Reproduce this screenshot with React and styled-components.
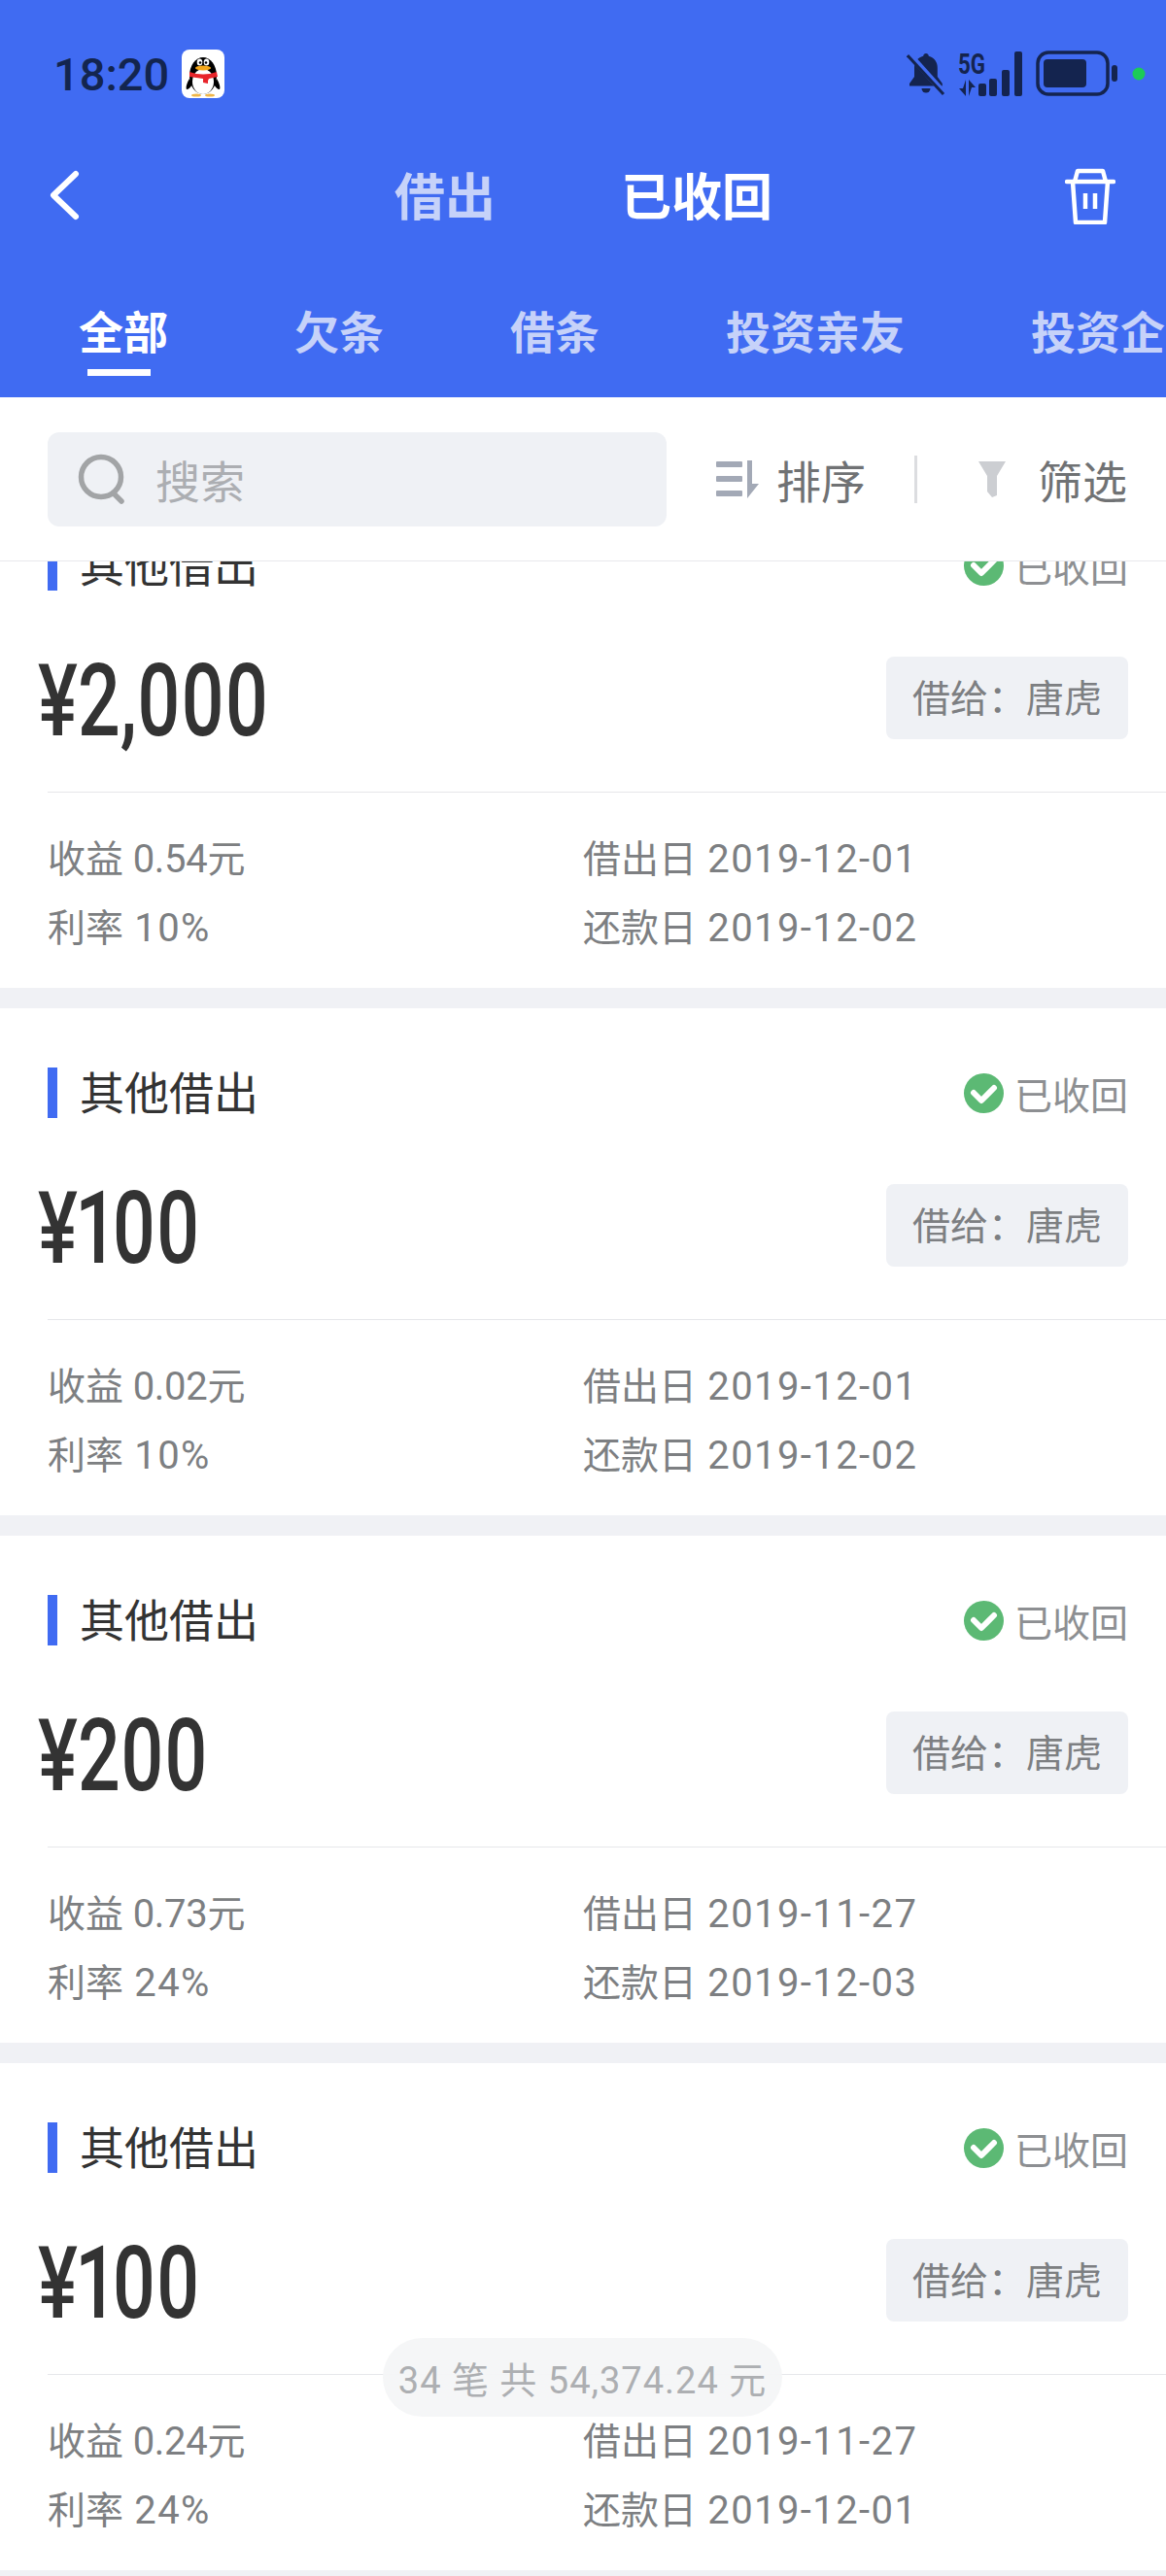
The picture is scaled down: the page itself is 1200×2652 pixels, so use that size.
import React from "react";
import styled, { createGlobalStyle } from "styled-components";

const FONT = `Roboto, "Noto Sans CJK SC", sans-serif`;

const Global = createGlobalStyle`
  html, body { margin: 0; padding: 0; background: #fff; }
  * { box-sizing: border-box; }
`;

const Page = styled.div`
  position: relative;
  width: 1200px;
  height: 2652px;
  display: flex;
  flex-direction: column;
  overflow: hidden;
  background: #f0f1f5;
  font-family: ${FONT};
`;

const Header = styled.header`
  height: 409px;
  flex: none;
  background: #406bf2;
  display: flex;
  flex-direction: column;
`;

const StatusBar = styled.div`
  height: 152px;
  flex: none;
  padding: 0 21px 0 55px;
  display: flex;
  align-items: center;
  justify-content: space-between;
`;

const StatusLeft = styled.div`
  display: flex;
  align-items: center;
  gap: 13px;
`;

const Clock = styled.span`
  font-size: 47px;
  font-weight: 500;
  color: #13254f;
`;

const StatusRight = styled.div`
  display: flex;
  align-items: center;
`;

const NavBar = styled.div`
  height: 98px;
  flex: none;
  padding: 0 52px 0 49px;
  position: relative;
  display: flex;
  align-items: center;
  justify-content: space-between;
`;

const NavTitles = styled.div`
  position: absolute;
  left: 406px;
  top: -2px;
  height: 100%;
  display: flex;
  align-items: center;
  gap: 129px;
`;

const NavTitle = styled.span`
  font-size: 52px;
  font-weight: 700;
  color: ${(p) => (p.$active ? "#ffffff" : "#c6d2f9")};
`;

const Tabs = styled.nav`
  flex: 1;
  display: flex;
  padding: 60px 0 0 81px;
  gap: 130px;
  white-space: nowrap;
  overflow: hidden;
`;

const Tab = styled.span`
  position: relative;
  height: 70px;
  line-height: 66px;
  font-size: 46px;
  font-weight: 700;
  color: ${(p) => (p.$active ? "#ffffff" : "#c6d2f9")};
  &::after {
    content: "";
    display: ${(p) => (p.$active ? "block" : "none")};
    position: absolute;
    left: 9px;
    right: 18px;
    bottom: -7px;
    height: 7px;
    background: #fff;
  }
`;

const Toolbar = styled.div`
  height: 169px;
  flex: none;
  background: #fff;
  border-bottom: 1px solid #e8e9ec;
  display: flex;
  align-items: center;
  padding: 0 42px 0 49px;
`;

const SearchBox = styled.div`
  width: 637px;
  height: 97px;
  flex: none;
  background: #eff1f5;
  border-radius: 12px;
  padding-left: 31px;
  display: flex;
  align-items: center;
  gap: 30px;
  font-size: 46px;
  color: #acaeb2;
`;

const ToolGroup = styled.div`
  flex: 1;
  display: flex;
  align-items: center;
  margin-left: 51px;
  font-size: 46px;
  color: #707274;
`;

const ToolButton = styled.div`
  display: flex;
  align-items: center;
  flex: none;
  white-space: nowrap;
  gap: ${(p) => p.$gap}px;
`;

const ToolDivider = styled.div`
  width: 3px;
  height: 49px;
  flex: none;
  background: #dcdde0;
  margin: 0 62px 0 50px;
`;

const Scroller = styled.div`
  flex: 1;
  overflow: hidden;
`;

const List = styled.div`
  margin-top: -83px;
  display: flex;
  flex-direction: column;
  gap: 21px;
`;

const Card = styled.article`
  background: #fff;
  height: 522px;
  flex: none;
  padding: 60px 0 0 49px;
`;

const CardHead = styled.div`
  height: 54px;
  display: flex;
  align-items: center;
  justify-content: space-between;
  padding-right: 39px;
`;

const CardType = styled.div`
  display: flex;
  align-items: center;
  gap: 23px;
  padding-top: 2px;
  font-size: 46px;
  line-height: 52px;
  color: #333;
  &::before {
    content: "";
    width: 10px;
    height: 52px;
    margin-top: -2px;
    background: #406bf2;
  }
`;

const StatusTag = styled.div`
  display: flex;
  align-items: center;
  gap: 11px;
  font-size: 39px;
  color: #8d8f92;
`;

const AmountRow = styled.div`
  height: 85px;
  margin-top: 67px;
  display: flex;
  align-items: center;
  justify-content: space-between;
  padding-right: 39px;
`;

const Amount = styled.div`
  margin-left: -10px;
  font-size: 104px;
  font-weight: 500;
  font-variant-numeric: proportional-nums;
  color: #333;
  line-height: 85px;
  transform: scaleX(0.74);
  transform-origin: left center;
  padding-top: 6px;
`;

const LenderTag = styled.div`
  width: 249px;
  height: 85px;
  padding-bottom: 6px;
  background: #eff1f5;
  border-radius: 8px;
  display: flex;
  align-items: center;
  justify-content: center;
  font-size: 39px;
  color: #7d7f82;
  white-space: pre;
`;

const Details = styled.div`
  margin-top: 54px;
  border-top: 1px solid #e6e7ea;
  padding-top: 33px;
  display: grid;
  grid-template-columns: 551px 1fr;
  grid-auto-rows: 71px;
`;

const DetailText = styled.div`
  font-size: 39px;
  line-height: 71px;
  color: #7d7f82;
  white-space: nowrap;
`;

const Num = styled.span`
  font-size: 40px;
  letter-spacing: ${(p) => (p.$tight ? "-0.3px" : "1.4px")};
`;

const TotalPill = styled.div`
  position: absolute;
  left: 394px;
  top: 2407px;
  width: 411px;
  height: 81px;
  border-radius: 41px;
  background: rgba(244, 245, 247, 0.94);
  display: flex;
  align-items: center;
  justify-content: center;
  font-size: 38px;
  letter-spacing: 1px;
  color: #adafb2;
  white-space: pre;
`;

const NAVY = "#14244f";

const QQIcon = () => (
  <svg width="44" height="50" viewBox="0 0 44 50">
    <rect width="44" height="50" rx="8" fill="#fff" />
    <ellipse cx="22" cy="27" rx="14" ry="19" fill="#000" />
    <ellipse cx="22" cy="33" rx="11" ry="13" fill="#fff" />
    <path d="M8 30c-3 5-4 9-3 11 2 0 4-2 6-5zM36 30c3 5 4 9 3 11-2 0-4-2-6-5z" fill="#000" />
    <ellipse cx="18.5" cy="13" rx="2.8" ry="3.6" fill="#fff" />
    <ellipse cx="25.5" cy="13" rx="2.8" ry="3.6" fill="#fff" />
    <circle cx="19" cy="13.5" r="1.3" fill="#000" />
    <circle cx="25" cy="13.5" r="1.3" fill="#000" />
    <ellipse cx="22" cy="19" rx="8" ry="2.6" fill="#f5a81c" />
    <path d="M8 23q14 5 28 0l1 5-9 2-1 2v3l-5-1v-4L8 28z" fill="#e8242b" />
    <ellipse cx="15" cy="47" rx="5" ry="1.6" fill="#efb64a" />
    <ellipse cx="29" cy="47" rx="5" ry="1.6" fill="#efb64a" />
  </svg>
);

const MutedBell = () => (
  <svg width="40" height="46" viewBox="0 0 40 46">
    <path d="M20 2c1.600 0 2.600 1 2.800 2.800 6 1.600 9 6.400 9 12.200v9l5 7v2.500H3V33l5-7v-9c0-6 3-10.600 9.200-12.200C17.400 3 18.400 2 20 2z" fill={NAVY} />
    <path d="M15.500 38h9a4.500 4.500 0 0 1-9 0z" fill={NAVY} />
    <path d="M2 2l36 40" stroke="#406bf2" strokeWidth="6" />
    <path d="M1 4l37 40" stroke={NAVY} strokeWidth="3" />
  </svg>
);

const Signal = () => (
  <svg width="66" height="48" viewBox="0 0 66 48" style={{ marginLeft: 13 }}>
    <text x="0" y="24" fontFamily="Roboto" fontWeight="700" fontSize="29" fill={NAVY} textLength="28" lengthAdjust="spacingAndGlyphs">5G</text>
    <path d="M8 30v17l-7-8h4zM11 47V30l7 8h-4z" fill={NAVY} />
    {[[21, 34], [32, 29], [45, 20], [58, 1]].map(([x, y]) => (
      <rect key={x} x={x} y={y} width="8" height={47 - y} rx="2" fill={NAVY} />
    ))}
  </svg>
);

const Battery = () => (
  <svg width="84" height="48" viewBox="0 0 84 48" style={{ marginLeft: 14 }}>
    <rect x="2" y="2" width="72" height="43" rx="11" fill="none" stroke={NAVY} strokeWidth="3.500" />
    <rect x="8" y="9" width="44" height="29" rx="4" fill={NAVY} />
    <rect x="78" y="15" width="6" height="17" rx="3" fill={NAVY} />
  </svg>
);

const GreenDot = () => (
  <svg width="14" height="14" viewBox="0 0 14 14" style={{ marginLeft: 15 }}>
    <circle cx="7" cy="7" r="6.500" fill="#1ccb58" />
  </svg>
);

const BackIcon = () => (
  <svg width="34" height="52" viewBox="0 0 34 52">
    <path d="M29 4L6 26l23 22" fill="none" stroke="#fff" strokeWidth="6" strokeLinecap="round" strokeLinejoin="round" />
  </svg>
);

const TrashIcon = () => (
  <svg width="52" height="58" viewBox="0 0 52 58" fill="none" stroke="#fff" strokeWidth="4.500" strokeLinejoin="round" style={{ marginTop: 2 }}>
    <path d="M2 14h48" strokeLinecap="round" />
    <path d="M10 14l3-11h26l3 11" />
    <path d="M8 14l3 42h30l3-42" />
    <path d="M21 26v16M31 26v16" />
  </svg>
);

const SearchIcon = () => (
  <svg width="50" height="52" viewBox="0 0 50 52" fill="none" stroke="#a2a4a6" strokeWidth="5.500" strokeLinecap="round">
    <circle cx="24" cy="24" r="20.500" />
    <path d="M37 41l8 8" />
  </svg>
);

const SortIcon = () => (
  <svg width="44" height="40" viewBox="0 0 44 40" fill="#a3a9b6">
    <rect y="2" width="27" height="6" rx="1" />
    <rect y="17" width="27" height="6" rx="1" />
    <rect y="32" width="27" height="6" rx="1" />
    <path d="M32 1h5v24h7L32 40z" />
  </svg>
);

const FunnelIcon = () => (
  <svg width="30" height="38" viewBox="0 0 30 38" fill="#ccced2">
    <path d="M1 1h28L20 16v20l-5 2-5-6V16z" />
  </svg>
);

const CheckBadge = () => (
  <svg width="41" height="41" viewBox="0 0 41 41">
    <circle cx="20.500" cy="20.500" r="20.500" fill="#5cb974" />
    <path d="M10 20l8 8 13-13" fill="none" stroke="#fff" strokeWidth="6" strokeLinecap="round" strokeLinejoin="round" />
  </svg>
);

const loans = [
  { amount: "¥2,000", profit: "0.54", rate: "10%", out: "2019-12-01", back: "2019-12-02" },
  { amount: "¥100", profit: "0.02", rate: "10%", out: "2019-12-01", back: "2019-12-02" },
  { amount: "¥200", profit: "0.73", rate: "24%", out: "2019-11-27", back: "2019-12-03" },
  { amount: "¥100", profit: "0.24", rate: "24%", out: "2019-11-27", back: "2019-12-01" },
];

const tabs = ["全部", "欠条", "借条", "投资亲友", "投资企业"];

export default function App() {
  return (
    <Page>
      <Global />
      <Header>
        <StatusBar>
          <StatusLeft>
            <Clock>18:20</Clock>
            <QQIcon />
          </StatusLeft>
          <StatusRight>
            <MutedBell />
            <Signal />
            <Battery />
            <GreenDot />
          </StatusRight>
        </StatusBar>
        <NavBar>
          <BackIcon />
          <NavTitles>
            <NavTitle>借出</NavTitle>
            <NavTitle $active>已收回</NavTitle>
          </NavTitles>
          <TrashIcon />
        </NavBar>
        <Tabs>
          {tabs.map((t, i) => (
            <Tab key={t} $active={i === 0}>{t}</Tab>
          ))}
        </Tabs>
      </Header>
      <Toolbar>
        <SearchBox>
          <SearchIcon />
          搜索
        </SearchBox>
        <ToolGroup>
          <ToolButton $gap={18}>
            <SortIcon />
            排序
          </ToolButton>
          <ToolDivider />
          <ToolButton $gap={32}>
            <FunnelIcon />
            筛选
          </ToolButton>
        </ToolGroup>
      </Toolbar>
      <Scroller>
        <List>
          {loans.map((l, i) => (
            <Card key={i}>
              <CardHead>
                <CardType>其他借出</CardType>
                <StatusTag>
                  <CheckBadge />
                  已收回
                </StatusTag>
              </CardHead>
              <AmountRow>
                <Amount>{l.amount}</Amount>
                <LenderTag>借给：唐虎</LenderTag>
              </AmountRow>
              <Details>
                <DetailText>收益<Num $tight>{` ${l.profit}`}</Num>元</DetailText>
                <DetailText>借出日<Num>{` ${l.out}`}</Num></DetailText>
                <DetailText>利率<Num>{` ${l.rate}`}</Num></DetailText>
                <DetailText>还款日<Num>{` ${l.back}`}</Num></DetailText>
              </Details>
            </Card>
          ))}
        </List>
      </Scroller>
      <TotalPill>34 笔 共 54,374.24 元</TotalPill>
    </Page>
  );
}
